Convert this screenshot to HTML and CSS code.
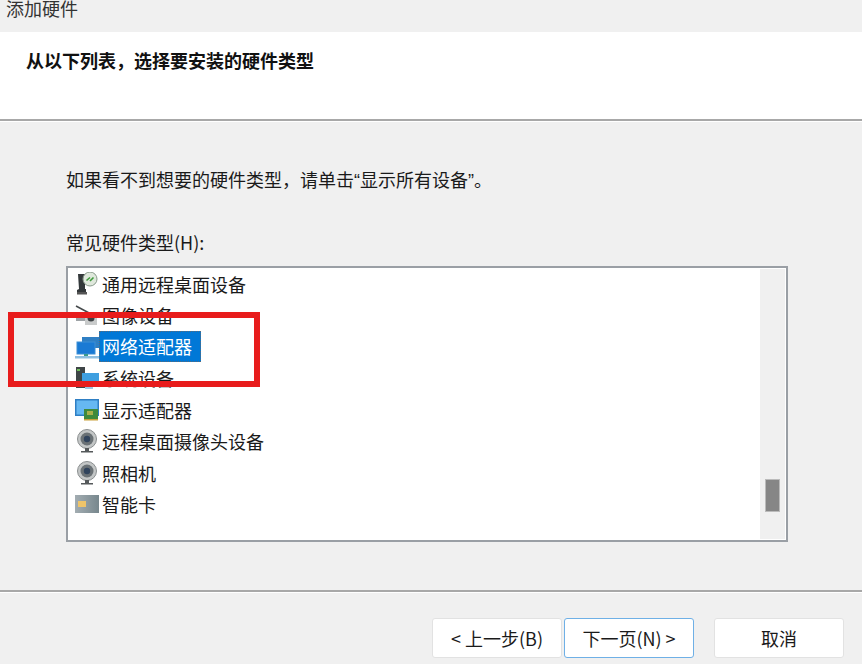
FILE: index.html
```html
<!DOCTYPE html>
<html lang="zh-CN">
<head>
    <meta charset="UTF-8">
    <title>添加硬件</title>
    <link rel="stylesheet" href="styles.css">
</head>
<body>
<div class="window">
    <div class="titlebar">添加硬件</div>
    <div class="header">
        <h2>从以下列表，选择要安装的硬件类型</h2>
    </div>
    <div class="content">
        <p class="hint">如果看不到想要的硬件类型，请单击<span class="quote">“</span>显示所有设备<span class="quote">”</span>。</p>
        <p class="list-label">常见硬件类型(H):</p>
        <div class="listbox">
            <ul class="items">
                <li class="item">
                    <svg class="icon" viewBox="0 0 24 24"><path d="M3 2h7v15h1v4H2v-3l2-1z" fill="#33383a"/><rect x="2" y="20" width="10" height="2.5" fill="#555"/><circle cx="15" cy="7" r="7" fill="#dfe8dc" stroke="#8a9a8c"/><path d="M11.5 8.5l3.5-3M18.5 5.5l-3.5 3.5" stroke="#3f9b3c" stroke-width="1.6" fill="none"/></svg>
                    <span class="label">通用远程桌面设备</span>
                </li>
                <li class="item">
                    <svg class="icon" viewBox="0 0 24 24"><path d="M1 3l15 8" stroke="#45494b" stroke-width="1.5"/><rect x="1" y="12" width="9" height="6" fill="#9ea3a6"/><rect x="10" y="9" width="12" height="13" fill="#c9cbcb"/><circle cx="16" cy="15" r="3.5" fill="#3c4144"/></svg>
                    <span class="label">图像设备</span>
                </li>
                <li class="item">
                    <svg class="icon" viewBox="0 0 24 24"><rect x="7" y="2" width="17" height="11" fill="#2f7fc4"/><rect x="2" y="7" width="18" height="12" fill="#1a7ad4" stroke="#3d8fd6"/><rect x="9" y="19" width="4" height="3" fill="#3a9a8c"/><rect x="0" y="21" width="24" height="2.5" fill="#8fbfe0"/></svg>
                    <span class="label selected">网络适配器</span>
                </li>
                <li class="item">
                    <svg class="icon" viewBox="0 0 24 24"><rect x="1" y="1" width="9" height="21" fill="#3f4547"/><rect x="2" y="3" width="3" height="2" fill="#6fbf5c"/><rect x="7" y="7" width="17" height="12" fill="#3f9fe0"/><rect x="10" y="19" width="8" height="4" fill="#9cc6e4"/></svg>
                    <span class="label">系统设备</span>
                </li>
                <li class="item">
                    <svg class="icon" viewBox="0 0 24 24"><rect x="0" y="1" width="24" height="17" fill="#2f7fc4"/><rect x="1.5" y="2.5" width="21" height="14" fill="#66b8f2"/><rect x="9" y="11" width="14" height="10" fill="#3f8a3c"/><rect x="12" y="13" width="6" height="4" fill="#a9b04a"/><rect x="9" y="21" width="14" height="1.5" fill="#c9a13c"/></svg>
                    <span class="label">显示适配器</span>
                </li>
                <li class="item">
                    <svg class="icon" viewBox="0 0 24 24"><use href="#webcam"/></svg>
                    <span class="label">远程桌面摄像头设备</span>
                </li>
                <li class="item">
                    <svg class="icon" viewBox="0 0 24 24"><use href="#webcam"/></svg>
                    <span class="label">照相机</span>
                </li>
                <li class="item">
                    <svg class="icon" viewBox="0 0 24 24"><defs><linearGradient id="card"><stop offset="0" stop-color="#a3adb2"/><stop offset="1" stop-color="#77878d"/></linearGradient></defs><rect x="0" y="3" width="24" height="18" fill="url(#card)"/><rect x="3" y="9" width="8" height="6" fill="#eec46a"/></svg>
                    <span class="label">智能卡</span>
                </li>
            </ul>
            <div class="scrollbar"><div class="thumb"></div></div>
        </div>
    </div>
    <div class="footer">
        <button class="button">&lt; 上一步(B)</button>
        <button class="button button-default">下一页(N) &gt;</button>
        <button class="button button-cancel">取消</button>
    </div>
</div>
<div class="callout"></div>

<svg class="defs" width="0" height="0">
    <symbol id="webcam" viewBox="0 0 24 24">
        <circle cx="12" cy="10" r="9.5" fill="#c3c6c6" stroke="#8b8f90"/>
        <circle cx="12" cy="10" r="6.5" fill="#6a7175"/>
        <circle cx="12" cy="10" r="3.2" fill="#30435c"/>
        <rect x="10" y="19" width="4" height="3" fill="#55595b"/>
        <rect x="6" y="22" width="12" height="1.5" fill="#55595b"/>
    </symbol>
</svg>
</body>
</html>
```

FILE: styles.css
```css
body {
    margin: 0;
    font-family: "Noto Sans CJK SC", "Liberation Sans", sans-serif;
    font-size: 18px;
    color: #1a1a1a;
    background-color: #f0f0f0;
}

.window {
    display: flex;
    flex-direction: column;
    height: 664px;
    overflow: hidden;
}

.titlebar {
    height: 32px;
    padding-left: 6px;
    line-height: 16px;
    color: #333;
}

.header {
    height: 87px;
    padding-left: 26px;
    background: #fff;
    border-bottom: 2px solid #a8a8a8;
    box-sizing: content-box;
}

.header h2 {
    margin: 14px 0 0;
    font-size: 18px;
    font-weight: 700;
    line-height: 28px;
    color: #111;
}

.content {
    flex: 1;
    padding: 0 74px 0 66px;
    border-top: 1px solid #fff;
    border-bottom: 2px solid #a8a8a8;
}

.hint {
    margin: 42px 0 0;
    line-height: 30px;
}

.quote {
    font-family: "Liberation Sans", sans-serif;
}

.list-label {
    margin: 31px 0 0;
    line-height: 30px;
}

.listbox {
    display: flex;
    height: 272px;
    margin: 9px 0 0;
    background: #fff;
    border: 2px solid #9a9fa5;
}

.items {
    flex: 1;
    margin: 0;
    padding: 0;
    list-style: none;
}

.item {
    display: flex;
    align-items: center;
    height: 31.5px;
    padding-left: 7px;
}

.icon {
    flex: none;
    width: 24px;
    height: 24px;
}

.label {
    margin-left: 3px;
    line-height: 30px;
}

.label.selected {
    padding: 0 9px 0 3px;
    margin-left: 0;
    line-height: 31px;
    color: #fff;
    background: #0078d7;
    outline: 1px dotted #5a6a78;
    outline-offset: -1px;
}

.scrollbar {
    width: 25px;
    margin: 1px 1px 1px 0;
    background: #f0f0f0;
}

.thumb {
    width: 15px;
    height: 33px;
    margin: 210px 0 0 5px;
    background: #868686;
    border: 1px solid #bbb;
    box-sizing: border-box;
}

.footer {
    display: flex;
    align-items: flex-start;
    height: 72px;
    padding: 25px 0 0 432px;
    box-sizing: border-box;
    border-top: 1px solid #fff;
}

.button {
    width: 130px;
    height: 40px;
    margin-right: 2px;
    padding: 0;
    font-family: inherit;
    font-size: 18px;
    color: #1a1a1a;
    background: #fff;
    border: 1px solid #e2e2e2;
    border-radius: 3px;
}

.button-default {
    margin-right: 20px;
    border-color: #6fb0e6;
}

.callout {
    position: absolute;
    left: 8px;
    top: 312px;
    width: 240px;
    height: 63px;
    border: 6px solid #e81c1c;
}

.defs {
    position: absolute;
}
```
